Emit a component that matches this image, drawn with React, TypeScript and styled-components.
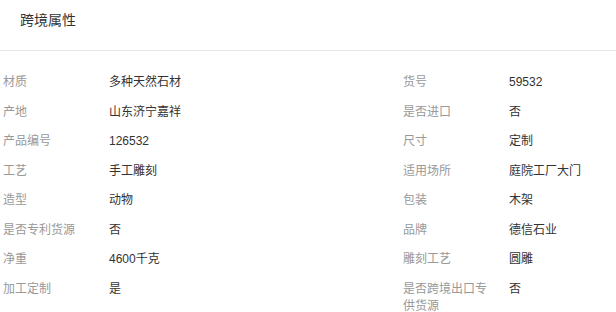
import React from "react";
import styled, { createGlobalStyle } from "styled-components";

const Global = createGlobalStyle`
  html, body { margin: 0; padding: 0; background: #fff; }
  body { font-family: "Liberation Sans", "Noto Sans CJK SC", sans-serif; }
`;

const Panel = styled.section`
  width: 616px;
  background: #fff;
`;

const Header = styled.div`
  padding: 10px 20px 20px;
  line-height: 20px;
  font-size: 14px;
  color: #333;
  border-bottom: 1px solid #e8e8e8;
`;

const Body = styled.div`
  display: grid;
  grid-template-columns: 400px 1fr;
  padding: 17px 0 0 3px;
`;

const Pair = styled.div`
  display: grid;
  grid-template-columns: 106px 1fr;
  align-items: start;
  padding: 6px 0;
  font-size: 12px;
  line-height: 17.5px;
`;

const Label = styled.div`
  color: #999;
  padding-right: 16px;
`;

const Value = styled.div`
  color: #333;
`;

const items: [string, string][] = [
  ["材质", "多种天然石材"],
  ["货号", "59532"],
  ["产地", "山东济宁嘉祥"],
  ["是否进口", "否"],
  ["产品编号", "126532"],
  ["尺寸", "定制"],
  ["工艺", "手工雕刻"],
  ["适用场所", "庭院工厂大门"],
  ["造型", "动物"],
  ["包装", "木架"],
  ["是否专利货源", "否"],
  ["品牌", "德信石业"],
  ["净重", "4600千克"],
  ["雕刻工艺", "圆雕"],
  ["加工定制", "是"],
  ["是否跨境出口专供货源", "否"],
];

export default function App() {
  return (
    <>
      <Global />
      <Panel>
        <Header>跨境属性</Header>
        <Body>
          {items.map(([k, v]) => (
            <Pair key={k}>
              <Label>{k}</Label>
              <Value>{v}</Value>
            </Pair>
          ))}
        </Body>
      </Panel>
    </>
  );
}
